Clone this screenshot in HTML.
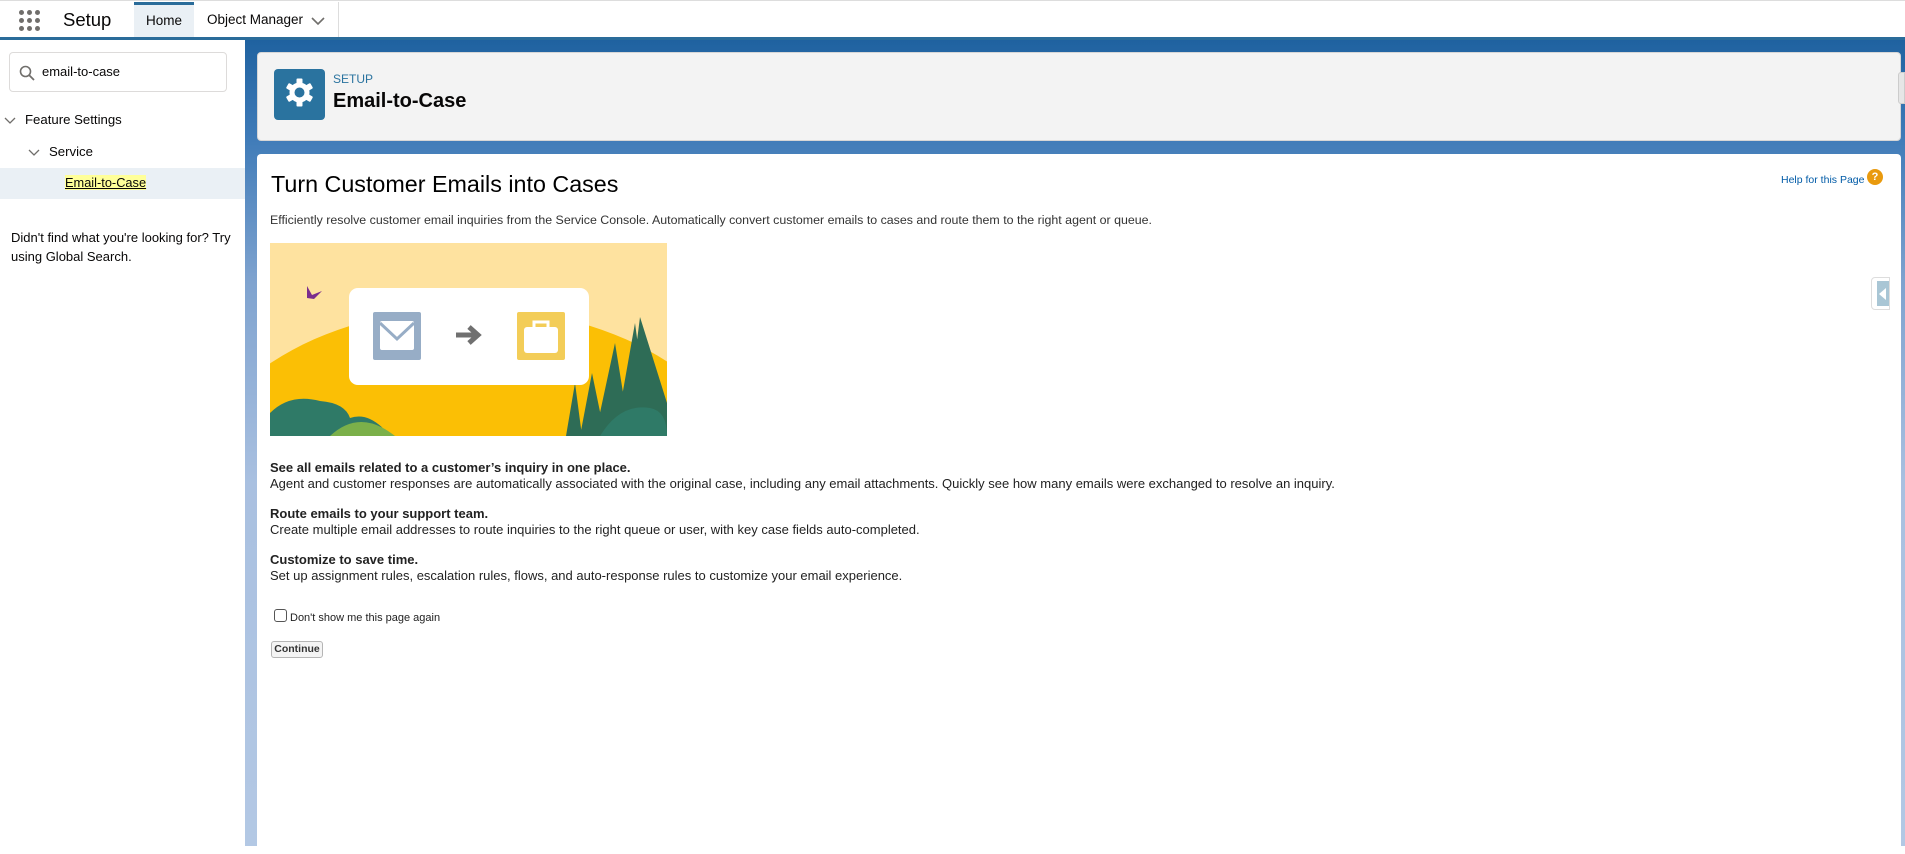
<!DOCTYPE html>
<html><head><style>
*{box-sizing:border-box;margin:0;padding:0}
body{width:1905px;height:846px;overflow:hidden;font-family:"Liberation Sans",Arial,sans-serif;background:#fff;position:relative;color:#080707}
.top{position:absolute;left:0;top:0;width:1905px;height:38px;background:#fff;border-top:1px solid #ddd}
.strip{position:absolute;left:0;top:37px;width:1905px;height:3px;background:#2a6c9a}
.dots{position:absolute;left:19px;top:9px;width:22px;height:22px}
.dots i{position:absolute;width:5px;height:5px;border-radius:50%;background:#706e6b}
.app{position:absolute;left:63px;top:8px;font-size:18.5px;color:#080707}
.tab{position:absolute;top:1px;height:36px;font-size:13.5px;line-height:36px;padding:0 13px;color:#080707}
.home{left:134px;width:60px;background:#eaf0f5;border-top:3px solid #2a6c9a;line-height:31px;text-align:center;padding:0}
.om{left:194px;width:145px;border-right:1px solid #ddd}
.side{position:absolute;left:0;top:40px;width:245px;height:806px;background:#fff}
.search{position:absolute;left:9px;top:12px;width:218px;height:40px;border:1px solid #dddbda;border-radius:4px;font-size:13px;padding:0 0 0 32px;line-height:38px}
.nav{position:absolute;font-size:13.2px;color:#080707}
.sel{position:absolute;left:0;top:128px;width:245px;height:31px;background:#eaf0f5}
.bg{position:absolute;left:245px;top:40px;width:1660px;height:806px;background:linear-gradient(180deg,#1f62a0 0%,#3f7bb8 12%,#7fa3cf 30%,#a9c0e0 55%,#b3c8e4 100%)}
.card1{position:absolute;left:257px;top:52px;width:1644px;height:89px;background:#f3f3f3;border-radius:4px;border:1px solid #d6d6d6}
.card2{position:absolute;left:257px;top:154px;width:1644px;height:700px;background:#fff;border-radius:4px}
.t{position:absolute;white-space:nowrap}
</style></head><body>
<div class="top">
 <div class="dots"><i style="left:0;top:0"></i><i style="left:8px;top:0"></i><i style="left:16px;top:0"></i><i style="left:0;top:8px"></i><i style="left:8px;top:8px"></i><i style="left:16px;top:8px"></i><i style="left:0;top:16px"></i><i style="left:8px;top:16px"></i><i style="left:16px;top:16px"></i></div>
 <div class="app">Setup</div>
 <div class="tab home">Home</div>
 <div class="tab om">Object Manager <svg width="14" height="10" style="position:absolute;left:117px;top:14px" viewBox="0 0 14 10"><path d="M1 2l6 6 6-6" fill="none" stroke="#706e6b" stroke-width="1.6"/></svg></div>
</div>
<div class="strip"></div>
<div class="side">
 <div class="search"><svg width="16" height="16" style="position:absolute;left:9px;top:12px" viewBox="0 0 16 16"><circle cx="6.5" cy="6.5" r="5" fill="none" stroke="#706e6b" stroke-width="1.6"/><path d="M10 10l5 5" stroke="#706e6b" stroke-width="1.8"/></svg>email-to-case</div>
 <svg width="12" height="8" style="position:absolute;left:4px;top:77px" viewBox="0 0 12 8"><path d="M1 1l5 5 5-5" fill="none" stroke="#706e6b" stroke-width="1.3"/></svg>
 <div class="nav" style="left:25px;top:72px">Feature Settings</div>
 <svg width="12" height="8" style="position:absolute;left:28px;top:109px" viewBox="0 0 12 8"><path d="M1 1l5 5 5-5" fill="none" stroke="#706e6b" stroke-width="1.3"/></svg>
 <div class="nav" style="left:49px;top:104px">Service</div>
 <div class="sel"></div>
 <div class="nav" style="left:65px;top:135px;font-size:12.8px;background:#ffff99;text-decoration:underline">Email-to-Case</div>
 <div class="nav" style="left:11px;top:188px;font-size:13px;line-height:19px;white-space:nowrap">Didn't find what you're looking for? Try<br>using Global Search.</div>
</div>
<div class="bg"></div>
<div class="card1">
 <div style="position:absolute;left:16px;top:16px;width:51px;height:51px;background:#2a739f;border-radius:4px">
  <svg width="51" height="51" viewBox="0 0 51 51"><g transform="translate(25.5,23.5)" fill="#fff"><circle r="10"/><g id="tt"><rect x="-3" y="-14" width="6" height="7" rx="1"/></g><use href="#tt" transform="rotate(60)"/><use href="#tt" transform="rotate(120)"/><use href="#tt" transform="rotate(180)"/><use href="#tt" transform="rotate(240)"/><use href="#tt" transform="rotate(300)"/><circle r="5" fill="#2a739f"/></g></svg>
 </div>
 <div class="t" style="left:75px;top:19px;font-size:12px;color:#2a739f">SETUP</div>
 <div class="t" style="left:75px;top:37px;font-size:20px;font-weight:bold">Email-to-Case</div>
</div>
<div style="position:absolute;left:1898px;top:72px;width:7px;height:32px;background:#e6e6e6;border-radius:3px 0 0 3px;border:1px solid #ccc"></div>
<div class="card2">
 <div class="t" style="left:14px;top:17px;font-size:23.3px;color:#000">Turn Customer Emails into Cases</div>
 <div class="t" style="left:1524px;top:20px;font-size:10.5px;color:#015ba7">Help for this Page</div>
 <div style="position:absolute;left:1610px;top:15px;width:16px;height:16px;border-radius:50%;background:#e99a0e;color:#fff;font-size:11px;font-weight:bold;text-align:center;line-height:16px">?</div>
 <div class="t" style="left:13px;top:59px;font-size:12.4px;color:#333">Efficiently resolve customer email inquiries from the Service Console. Automatically convert customer emails to cases and route them to the right agent or queue.</div>
 <svg style="position:absolute;left:13px;top:89px" width="397" height="193" viewBox="0 0 397 193">
  <rect width="397" height="193" fill="#fee29f"/>
  <ellipse cx="200" cy="250" rx="280" ry="185" fill="#fbbf05"/>
  <path d="M0 193 L0 170 Q20 150 50 158 Q75 160 80 175 Q100 168 120 193Z" fill="#2f7a67"/>
  <path d="M60 193 Q90 165 125 193Z" fill="#7bb04a"/>
  <path d="M296 193 L305 140 L312 193Z M310 193 L322 130 L335 193Z M325 193 L345 100 L360 193Z M345 193 L365 80 L380 193Z M355 193 L370 74 L397 160 L397 193Z" fill="#2e6c56"/>
  <path d="M330 193 Q350 160 380 165 Q397 168 397 193Z" fill="#2f7a67"/>
  <rect x="79" y="45" width="240" height="97" rx="9" fill="#fff"/>
  <rect x="103" y="69" width="48" height="48" rx="2" fill="#97adc6"/>
  <rect x="110" y="78" width="34" height="29" rx="2" fill="#fff"/>
  <path d="M110 80 L127 96 L144 80" fill="none" stroke="#97adc6" stroke-width="3"/>
  <path d="M186 92 H206 M199 84 L208 92 L199 100" fill="none" stroke="#707070" stroke-width="5"/>
  <rect x="247" y="69" width="48" height="48" rx="2" fill="#f3cd58"/>
  <rect x="254" y="84" width="34" height="26" rx="3" fill="#fff"/>
  <path d="M264 84 V79 H278 V84" fill="none" stroke="#fff" stroke-width="3"/>
  <path d="M37 43 L42 52 L52 48 L44 56 L37 55Z" fill="#7b2d8e"/>
 </svg>
 <div class="t" style="left:13px;top:306px;font-size:13px;line-height:16px;color:#222"><b>See all emails related to a customer’s inquiry in one place.</b><br>Agent and customer responses are automatically associated with the original case, including any email attachments. Quickly see how many emails were exchanged to resolve an inquiry.</div>
 <div class="t" style="left:13px;top:352px;font-size:13px;line-height:16px;color:#222"><b>Route emails to your support team.</b><br>Create multiple email addresses to route inquiries to the right queue or user, with key case fields auto-completed.</div>
 <div class="t" style="left:13px;top:398px;font-size:13px;line-height:16px;color:#222"><b>Customize to save time.</b><br>Set up assignment rules, escalation rules, flows, and auto-response rules to customize your email experience.</div>
 <div style="position:absolute;left:17px;top:455px;width:13px;height:13px;border:1px solid #555;border-radius:3px;background:#fff"></div>
 <div class="t" style="left:33px;top:458px;font-size:11px;color:#222">Don't show me this page again</div>
 <div style="position:absolute;left:14px;top:487px;width:52px;height:17px;border:1px solid #b5b5b5;border-radius:3px;background:#f4f4f4;font-size:10.5px;font-weight:bold;text-align:center;line-height:15px;color:#333">Continue</div>
</div>
<div style="position:absolute;left:1871px;top:277px;width:19px;height:33px;background:#fff;border-radius:4px 0 0 4px;border:1px solid #ddd"><div style="position:absolute;left:5px;top:3px;width:12px;height:25px;background:#a9c6d5"></div><div style="position:absolute;left:7px;top:10px;border-right:7px solid #fff;border-top:6px solid transparent;border-bottom:6px solid transparent"></div></div>
</body></html>
